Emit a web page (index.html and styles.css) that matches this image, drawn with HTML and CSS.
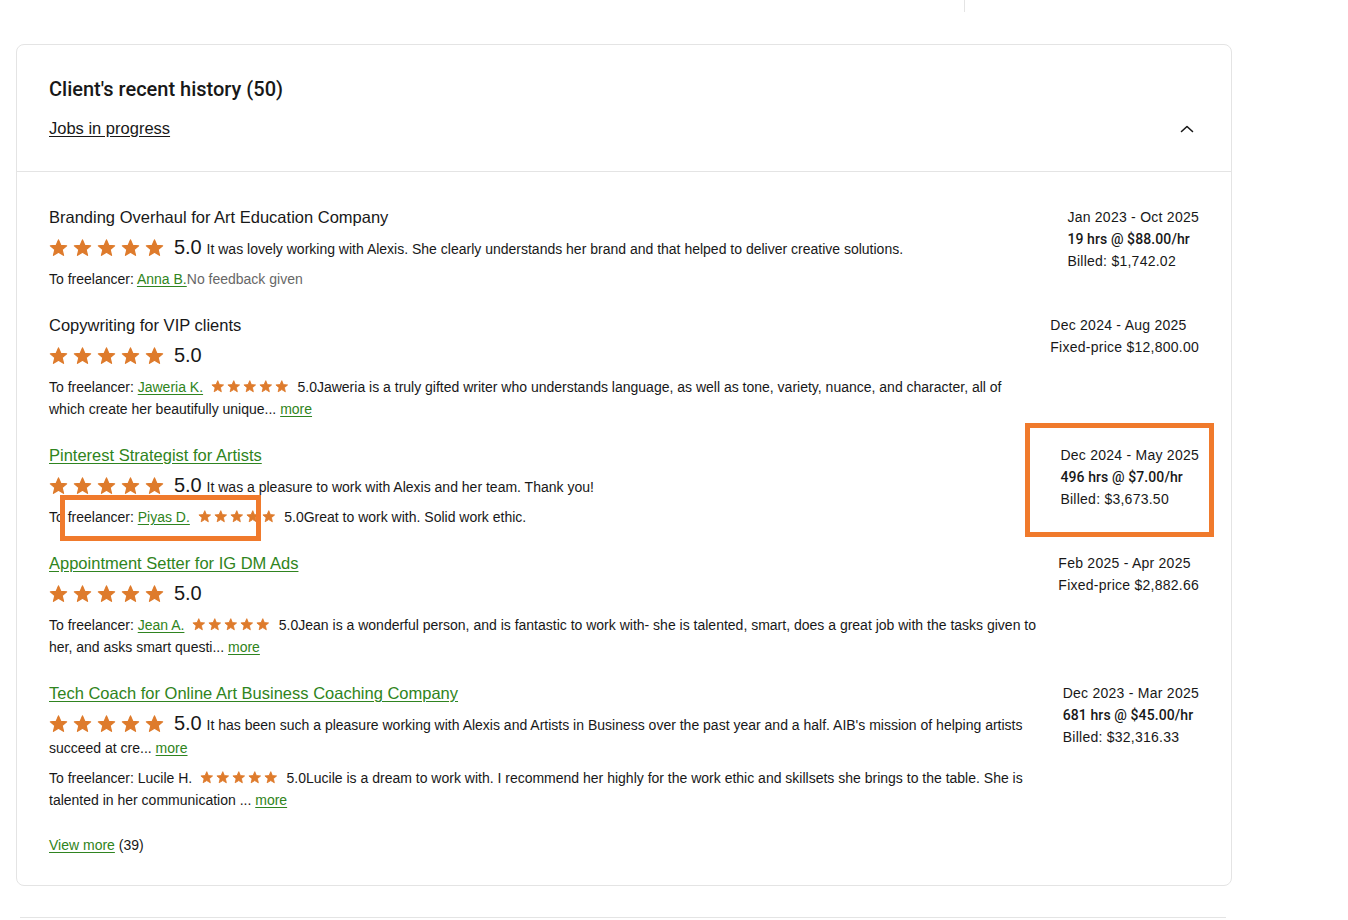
FILE: index.html
```html
<!DOCTYPE html>
<html>

<head>
    <link rel="stylesheet" href="styles.css">
    <title>Client's recent history</title>
</head>

<body>
    <svg width="0" height="0" class="defs">
        <symbol id="star" viewBox="-1 -1 22 21">
            <polygon points="10,0 12.65,6.36 19.51,6.91 14.28,11.39 15.88,18.09 10,14.5 4.12,18.09 5.72,11.39 0.49,6.91 7.35,6.36" fill="currentColor" stroke="currentColor" stroke-width="1.4" stroke-linejoin="round" />
        </symbol>
    </svg>
    <div id="page-wrapper">
        <div class="top-strip"><span class="top-divider"></span></div>

        <section class="card">
            <div class="card-header">
                <h2>Client's recent history (50)</h2>
                <div class="header-row">
                    <a href="#" class="plain-link">Jobs in progress</a>
                    <svg class="chevron" viewBox="0 0 24 24"><path d="M6.5 14.5 L12 9.5 L17.5 14.5" fill="none" stroke="#181818" stroke-width="1.6" stroke-linecap="round" stroke-linejoin="round" /></svg>
                </div>
            </div>

            <div class="card-body">
                <div class="job">
                    <div class="job-main">
                        <div class="job-title">Branding Overhaul for Art Education Company</div>
                        <p class="rating">
                            <span class="stars-lg"><svg><use href="#star" /></svg><svg><use href="#star" /></svg><svg><use href="#star" /></svg><svg><use href="#star" /></svg><svg><use href="#star" /></svg></span>
                            <span class="score-lg">5.0</span>
                            It was lovely working with Alexis. She clearly understands her brand and that helped to deliver creative solutions.
                        </p>
                        <p class="freelancer">To freelancer: <a href="#">Anna B.</a><span class="muted">No feedback given</span></p>
                    </div>
                    <div class="job-side">
                        <div>Jan 2023 - Oct 2025</div>
                        <div class="strong">19 hrs @ $88.00/hr</div>
                        <div>Billed: $1,742.02</div>
                    </div>
                </div>

                <div class="job">
                    <div class="job-main">
                        <div class="job-title">Copywriting for VIP clients</div>
                        <p class="rating">
                            <span class="stars-lg"><svg><use href="#star" /></svg><svg><use href="#star" /></svg><svg><use href="#star" /></svg><svg><use href="#star" /></svg><svg><use href="#star" /></svg></span>
                            <span class="score-lg">5.0</span>
                        </p>
                        <p class="freelancer">To freelancer: <a href="#">Jaweria K.</a>
                            <span class="stars-sm"><svg><use href="#star" /></svg><svg><use href="#star" /></svg><svg><use href="#star" /></svg><svg><use href="#star" /></svg><svg><use href="#star" /></svg></span>5.0Jaweria is a truly gifted writer who understands language, as well as tone, variety, nuance, and character, all of which create her beautifully unique... <a href="#">more</a></p>
                    </div>
                    <div class="job-side">
                        <div>Dec 2024 - Aug 2025</div>
                        <div>Fixed-price $12,800.00</div>
                    </div>
                </div>

                <div class="job">
                    <div class="job-main">
                        <div class="job-title"><a href="#">Pinterest Strategist for Artists</a></div>
                        <p class="rating">
                            <span class="stars-lg"><svg><use href="#star" /></svg><svg><use href="#star" /></svg><svg><use href="#star" /></svg><svg><use href="#star" /></svg><svg><use href="#star" /></svg></span>
                            <span class="score-lg">5.0</span>
                            It was a pleasure to work with Alexis and her team. Thank you!
                        </p>
                        <p class="freelancer">To freelancer: <a href="#">Piyas D.</a>
                            <span class="stars-sm"><svg><use href="#star" /></svg><svg><use href="#star" /></svg><svg><use href="#star" /></svg><svg><use href="#star" /></svg><svg><use href="#star" /></svg></span>5.0Great to work with. Solid work ethic.</p>
                    </div>
                    <div class="job-side">
                        <div>Dec 2024 - May 2025</div>
                        <div class="strong">496 hrs @ $7.00/hr</div>
                        <div>Billed: $3,673.50</div>
                    </div>
                </div>

                <div class="job">
                    <div class="job-main">
                        <div class="job-title"><a href="#">Appointment Setter for IG DM Ads</a></div>
                        <p class="rating">
                            <span class="stars-lg"><svg><use href="#star" /></svg><svg><use href="#star" /></svg><svg><use href="#star" /></svg><svg><use href="#star" /></svg><svg><use href="#star" /></svg></span>
                            <span class="score-lg">5.0</span>
                        </p>
                        <p class="freelancer">To freelancer: <a href="#">Jean A.</a>
                            <span class="stars-sm"><svg><use href="#star" /></svg><svg><use href="#star" /></svg><svg><use href="#star" /></svg><svg><use href="#star" /></svg><svg><use href="#star" /></svg></span>5.0Jean is a wonderful person, and is fantastic to work with- she is talented, smart, does a great job with the tasks given to her, and asks smart questi... <a href="#">more</a></p>
                    </div>
                    <div class="job-side">
                        <div>Feb 2025 - Apr 2025</div>
                        <div>Fixed-price $2,882.66</div>
                    </div>
                </div>

                <div class="job">
                    <div class="job-main">
                        <div class="job-title"><a href="#">Tech Coach for Online Art Business Coaching Company</a></div>
                        <p class="rating">
                            <span class="stars-lg"><svg><use href="#star" /></svg><svg><use href="#star" /></svg><svg><use href="#star" /></svg><svg><use href="#star" /></svg><svg><use href="#star" /></svg></span>
                            <span class="score-lg">5.0</span>
                            It has been such a pleasure working with Alexis and Artists in Business over the past year and a half. AIB's mission of helping artists succeed at cre... <a href="#">more</a>
                        </p>
                        <p class="freelancer">To freelancer: Lucile H.
                            <span class="stars-sm"><svg><use href="#star" /></svg><svg><use href="#star" /></svg><svg><use href="#star" /></svg><svg><use href="#star" /></svg><svg><use href="#star" /></svg></span>5.0Lucile is a dream to work with. I recommend her highly for the work ethic and skillsets she brings to the table. She is talented in her communication ... <a href="#">more</a></p>
                    </div>
                    <div class="job-side">
                        <div>Dec 2023 - Mar 2025</div>
                        <div class="strong">681 hrs @ $45.00/hr</div>
                        <div>Billed: $32,316.33</div>
                    </div>
                </div>

                <div class="view-more"><a href="#">View more</a> (39)</div>
            </div>
        </section>

        <div class="next-card"></div>
    </div>

    <!-- review annotations drawn over the screenshot -->
    <div class="mark mark-freelancer"></div>
    <div class="mark mark-billing"></div>
</body>

</html>
```

FILE: styles.css
```css
html {
    font-family: "Liberation Sans", Arial, sans-serif;
    background: #FFFFFF;
    color: #181818;
    -webkit-font-smoothing: antialiased;
}

body {
    margin: 0;
    position: relative;
}

.defs {
    position: absolute;
}

#page-wrapper {
    width: 1216px;
    padding-left: 16px;
}

.top-strip {
    height: 12px;
}

.top-divider {
    display: block;
    height: 12px;
    margin-left: 948px;
    border-left: 1px solid #e4e4e4;
}

.card {
    margin-top: 32px;
    border: 1px solid #e4e4e4;
    border-radius: 8px;
}

.card-header {
    padding: 31px 32px 32px;
    border-bottom: 1px solid #e4e4e4;
}

.card-header h2 {
    margin: 0 0 15px;
    font-family: Roboto, "Liberation Sans", sans-serif;
    font-size: 20px;
    line-height: 26px;
    font-weight: 500;
}

.header-row {
    display: flex;
    justify-content: space-between;
    align-items: center;
    height: 22px;
}

.plain-link {
    color: #181818;
    font-size: 16.5px;
    line-height: 22px;
}

.chevron {
    width: 24px;
    height: 24px;
    margin-top: 2px;
}

.card-body {
    padding: 34px 32px 29px;
}

a {
    color: #2f8420;
    text-decoration: underline;
    text-underline-offset: 2px;
}

.job {
    display: flex;
    gap: 16px;
    padding-bottom: 24px;
}

.job-main {
    flex: 1;
    min-width: 0;
    max-width: 992px;
}

.job-title {
    font-size: 16.5px;
    line-height: 22px;
}

.rating {
    margin: 10px 0 0;
    font-size: 14px;
    line-height: 23px;
}

.stars-lg {
    display: inline-flex;
    gap: 5px;
    vertical-align: -3px;
    color: #de7b2c;
}

.stars-lg svg {
    width: 19px;
    height: 18px;
}

.score-lg {
    font-size: 20px;
    line-height: 18px;
    margin-left: 6px;
    margin-right: 1px;
}

.freelancer {
    margin: 7px 0 0;
    font-size: 14px;
    line-height: 22px;
    color: #181818;
}

.stars-sm {
    display: inline-flex;
    gap: 2.5px;
    margin: 0 9px 0 4px;
    vertical-align: -1px;
    color: #de7b2c;
}

.stars-sm svg {
    width: 13.5px;
    height: 13px;
}

.muted {
    color: #676767;
}

.job-side {
    flex: none;
    margin-left: auto;
    font-size: 14px;
    line-height: 22px;
    letter-spacing: 0.25px;
}

.strong {
    font-family: Roboto, "Liberation Sans", sans-serif;
    font-weight: 500;
    letter-spacing: 0.1px;
}

.view-more {
    margin-top: -1px;
    font-size: 14px;
    line-height: 22px;
}

.next-card {
    margin-top: 31px;
    margin-left: 4px;
    width: 1206px;
    height: 4px;
    border-top: 1px solid #e4e4e4;
}

.mark {
    position: absolute;
    border: 5px solid #f07a2c;
}

.mark-freelancer {
    left: 60px;
    top: 495px;
    width: 191px;
    height: 36px;
}

.mark-billing {
    left: 1025px;
    top: 423px;
    width: 179px;
    height: 104px;
}
```
